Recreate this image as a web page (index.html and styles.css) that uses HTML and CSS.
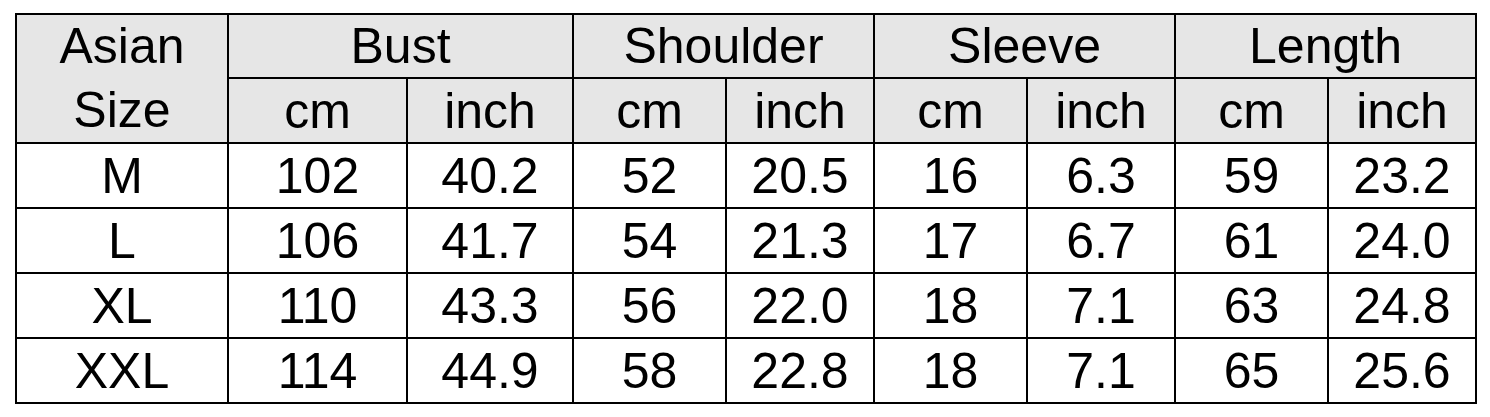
FILE: index.html
```html
<!DOCTYPE html>
<html>
<head>
<meta charset="utf-8">
<link rel="stylesheet" href="styles.css">
</head>
<body>
<table class="size-table">
  <colgroup>
    <col class="c-size">
    <col class="c-a"><col class="c-b">
    <col class="c-c"><col class="c-d">
    <col class="c-c"><col class="c-d">
    <col class="c-c"><col class="c-d">
  </colgroup>
  <thead>
    <tr class="h1">
      <th rowspan="2" class="size-head">Asian<br>Size</th>
      <th colspan="2">Bust</th>
      <th colspan="2">Shoulder</th>
      <th colspan="2">Sleeve</th>
      <th colspan="2">Length</th>
    </tr>
    <tr class="h2">
      <th>cm</th><th>inch</th>
      <th>cm</th><th>inch</th>
      <th>cm</th><th>inch</th>
      <th>cm</th><th>inch</th>
    </tr>
  </thead>
  <tbody>
    <tr><td>M</td><td>102</td><td>40.2</td><td>52</td><td>20.5</td><td>16</td><td>6.3</td><td>59</td><td>23.2</td></tr>
    <tr><td>L</td><td>106</td><td>41.7</td><td>54</td><td>21.3</td><td>17</td><td>6.7</td><td>61</td><td>24.0</td></tr>
    <tr><td>XL</td><td>110</td><td>43.3</td><td>56</td><td>22.0</td><td>18</td><td>7.1</td><td>63</td><td>24.8</td></tr>
    <tr><td>XXL</td><td>114</td><td>44.9</td><td>58</td><td>22.8</td><td>18</td><td>7.1</td><td>65</td><td>25.6</td></tr>
  </tbody>
</table>
</body>
</html>
```

FILE: styles.css
```css
html, body {
  margin: 0;
  padding: 0;
  background: #ffffff;
}

body {
  padding: 13px 0 0 15px;
}

.size-table {
  border-collapse: collapse;
  table-layout: fixed;
  width: 1461px;
  font-family: "Liberation Sans", Arial, sans-serif;
  font-size: 50px;
  color: #000;
}

.c-size { width: 212px; }
.c-a { width: 179px; }
.c-b { width: 166px; }
.c-c { width: 153px; }
.c-d { width: 148px; }

.size-table th,
.size-table td {
  border: 2px solid #000;
  padding: 0;
  text-align: center;
  vertical-align: middle;
  font-weight: normal;
  line-height: 56px;
}

.size-table thead th {
  background: #e6e6e6;
}

.size-table .size-head {
  line-height: 63.5px;
}

.h1 { height: 64px; }
.h2 { height: 65px; }
.size-table tbody tr { height: 65px; }
```
